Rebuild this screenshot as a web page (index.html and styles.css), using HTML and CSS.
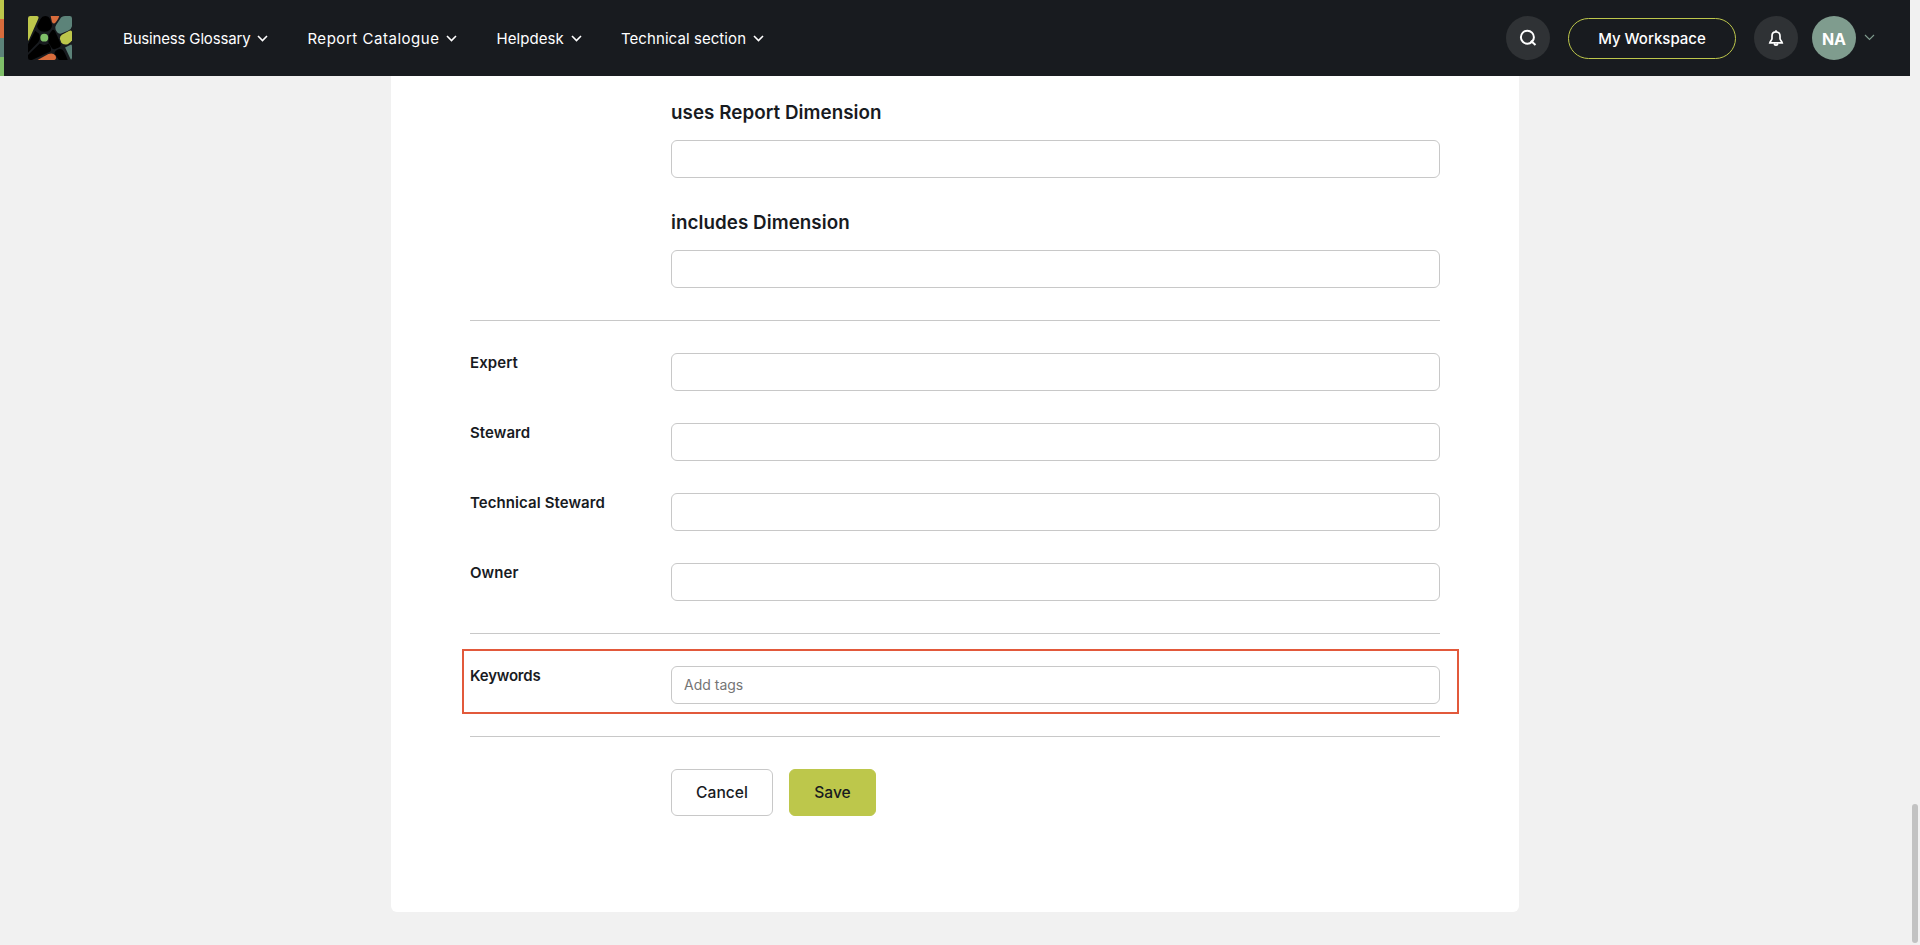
FILE: index.html
```
<!DOCTYPE html>
<html lang="en">
<head>
    <meta charset="UTF-8">
    <meta name="viewport" content="width=device-width, initial-scale=1.0">
    <title>Report - Edit</title>
    <link rel="stylesheet" href="styles.css">
</head>
<body>
    <div class="page">
        <header class="header">
            <div class="stripe"><span></span><span></span><span></span><span></span></div>
            <a class="logo" href="#">
                <svg width="44" height="44" viewBox="0 0 134 134">
                    <defs>
                        <clipPath id="logo-clip"><rect width="134" height="134" rx="7"/></clipPath>
                    </defs>
                    <g clip-path="url(#logo-clip)">
                        <rect width="134" height="134" fill="#181b1f"/>
                        <path d="M0 0H26Q35 0 31 9L4 70L0 76Z" fill="#bdc74b"/>
                        <path d="M38 9Q43 0 52 0Q63 0 67 9L73 27Q74 35 68 41Q61 48 50 48Q38 48 32 40Q26 33 28 29Z" fill="#000"/>
                        <path d="M22 45Q29 51 34 54Q36 57 36 66Q36 74 31 80L0 112V86Z" fill="#000"/>
                        <path d="M0 119L36 84Q50 93 63 84L69 95Q73 106 65 110L12 134H0Z" fill="#000"/>
                        <path d="M63 57L74 43Q77 39 82 46L99 83Q102 92 94 96L81 101Q75 103 71 95L62 80Q66 68 63 57Z" fill="#000"/>
                        <path d="M87 104Q97 98 105 103Q111 108 121 134H94Q87 123 82 117Q78 109 87 104Z" fill="#000"/>
                        <path d="M69 0H95Q94 6 84 20Q78 27 73 18Z" fill="#d86c3c"/>
                        <path d="M98 8Q102 0 113 0H134V31Q132 41 122 45L99 54Q89 54 84 41Q81 34 86 27Z" fill="#5c8379"/>
                        <path d="M103 57L126 45Q134 42 134 49V74Q131 81 121 86Q107 90 101 80L97 69Q97 62 103 57Z" fill="#bdc74b"/>
                        <path d="M113 96L128 88Q134 85 134 92V134H131Z" fill="#5c8379"/>
                        <path d="M29 134L62 116Q75 110 84 121Q88 131 80 134Z" fill="#d86c3c"/>
                        <circle cx="49.500" cy="66" r="12" fill="#7fbf69"/>
                    </g>
                </svg>
            </a>
            <nav class="nav">
                <a class="nav-item glossary" href="#">Business Glossary <svg class="chevron" viewBox="0 0 11 7"><path d="M1 1L5.500 5.500L10 1"/></svg></a>
                <a class="nav-item catalogue" href="#">Report Catalogue <svg class="chevron" viewBox="0 0 11 7"><path d="M1 1L5.500 5.500L10 1"/></svg></a>
                <a class="nav-item" href="#">Helpdesk <svg class="chevron" viewBox="0 0 11 7"><path d="M1 1L5.500 5.500L10 1"/></svg></a>
                <a class="nav-item" href="#">Technical section <svg class="chevron" viewBox="0 0 11 7"><path d="M1 1L5.500 5.500L10 1"/></svg></a>
            </nav>
            <div class="tools">
                <button class="round-button" aria-label="Search">
                    <svg width="18" height="18" viewBox="0 0 18 18">
                        <circle cx="8.400" cy="8.200" r="6.500"/>
                        <path d="M11.800 11.800L16.500 16"/>
                    </svg>
                </button>
                <a class="workspace" href="#">My Workspace</a>
                <button class="round-button" aria-label="Notifications">
                    <svg class="bell" width="16" height="18" viewBox="0 0 16 18">
                        <path d="M8 1.300V2.800M8 2.800C5.300 2.800 4 4.700 4 7V9.500C4 11 2.300 12.200 1.800 13.900H14.200C13.700 12.200 12 11 12 9.500V7C12 4.700 10.700 2.800 8 2.800ZM6 15.200Q8 17.200 10 15.200"/>
                    </svg>
                </button>
                <div class="avatar">NA</div>
                <svg class="chevron user-chevron" viewBox="0 0 11 7"><path d="M1 1L5.500 5.500L10 1"/></svg>
            </div>
        </header>

        <main class="card">
            <section class="relations">
                <h3>uses Report Dimension</h3>
                <input class="field" type="text">
                <h3>includes Dimension</h3>
                <input class="field" type="text">
            </section>

            <section class="group">
                <div class="row">
                    <label for="expert">Expert</label>
                    <input class="field" id="expert" type="text">
                </div>
                <div class="row">
                    <label for="steward">Steward</label>
                    <input class="field" id="steward" type="text">
                </div>
                <div class="row">
                    <label for="technical">Technical Steward</label>
                    <input class="field" id="technical" type="text">
                </div>
                <div class="row">
                    <label for="owner">Owner</label>
                    <input class="field" id="owner" type="text">
                </div>
            </section>

            <section class="group">
                <div class="row highlighted">
                    <label class="keywords" for="keywords">Keywords</label>
                    <input class="field" id="keywords" type="text" placeholder="Add tags">
                </div>
            </section>

            <div class="group actions">
                <button class="button cancel">Cancel</button>
                <button class="button save">Save</button>
            </div>
        </main>
    </div>
    <div class="scrollbar"><div class="thumb"></div></div>
</body>
</html>
```
FILE: styles.css
```
* {
    box-sizing: border-box;
}

body {
    display: flex;
    height: 100vh;
    margin: 0;
    overflow: hidden;
    background: #f1f1f1;
    color: #181b1f;
    font-family: Inter, "Open Sans", sans-serif;
    font-size: 15px;
    line-height: 20px;
}

a {
    color: inherit;
    text-decoration: none;
}

button,
input {
    font-family: inherit;
}

.page {
    flex: 1;
}

/* Header */
.header {
    display: flex;
    align-items: center;
    height: 76px;
    padding-right: 35px;
    background: #181b1f;
    color: #fff;
}

.stripe {
    display: flex;
    flex-direction: column;
    align-self: stretch;
    width: 4px;
}

.stripe span {
    flex: 1;
    background: #bdc74b;
}

.stripe span:nth-child(2) {
    background: #d86c3c;
}

.stripe span:nth-child(3) {
    background: #5c8379;
}

.stripe span:nth-child(4) {
    background: #7fbf69;
}

.logo {
    display: flex;
    margin-left: 24px;
}

.nav {
    display: flex;
    gap: 39px;
    margin-left: 51px;
    padding-top: 1px;
}

.nav-item {
    display: flex;
    align-items: center;
    gap: 7px;
    letter-spacing: 0.08px;
    white-space: nowrap;
}

.nav-item.glossary {
    letter-spacing: -0.17px;
}

.nav-item.catalogue {
    letter-spacing: 0.53px;
}

.chevron {
    width: 11px;
    height: 7px;
    fill: none;
    stroke: #fff;
    stroke-width: 1.6;
}

.user-chevron {
    margin: -1px 0 0 8px;
    stroke: #7f9c8e;
    stroke-width: 1.1;
}

.tools {
    display: flex;
    align-items: center;
    margin-left: auto;
}

.round-button {
    display: flex;
    align-items: center;
    justify-content: center;
    width: 44px;
    height: 44px;
    padding: 0;
    border: none;
    border-radius: 50%;
    background: #2f3235;
}

.round-button svg {
    fill: none;
    stroke: #fff;
    stroke-width: 2;
}

.round-button .bell {
    stroke-width: 1.7;
}

.workspace {
    display: flex;
    align-items: center;
    justify-content: center;
    width: 168px;
    height: 41px;
    margin: 0 18px;
    padding-top: 1px;
    border: 1px solid #bdc74b;
    border-radius: 21px;
    font-weight: 500;
}

.avatar {
    width: 44px;
    height: 44px;
    margin-left: 14px;
    border-radius: 50%;
    background: #7f9c8e;
    font-size: 16px;
    font-weight: 700;
    line-height: 46px;
    text-align: center;
}

/* Form */
.card {
    width: 1128px;
    margin: 0 auto;
    padding: 25px 79px 96px;
    border-radius: 0 0 6px 6px;
    background: #fff;
}

.relations {
    padding: 0 0 32px 201px;
}

.relations h3 {
    margin: 0 0 15px;
    font-size: 18.8px;
    font-weight: 600;
    letter-spacing: 0.05px;
    line-height: 24px;
}

.relations .field + h3 {
    margin-top: 33px;
}

.field {
    display: block;
    width: 100%;
    height: 38px;
    padding: 0 12px 2px;
    border: 1px solid #c8c8c8;
    border-radius: 6px;
    background: #fff;
    font-size: 14px;
}

.field::placeholder {
    color: #757575;
}

.group {
    display: flex;
    flex-direction: column;
    gap: 32px;
    padding: 32px 0;
    border-top: 1px solid #c8c8c8;
}

.row {
    display: grid;
    grid-template-columns: 201px 1fr;
}

.row label {
    font-weight: 600;
    letter-spacing: 0.08px;
}

.row .keywords {
    letter-spacing: -0.2px;
}

.highlighted {
    position: relative;
}

.highlighted::after {
    content: "";
    position: absolute;
    inset: -17px -19px -10px -8px;
    border: 2px solid #e2593b;
    pointer-events: none;
}

.actions {
    flex-direction: row;
    gap: 16px;
    padding: 32px 0 0 201px;
}

.button {
    height: 47px;
    padding: 0;
    border: 1px solid #c8c8c8;
    border-radius: 6px;
    background: #fff;
    color: #181b1f;
    font-size: 15.6px;
    font-weight: 500;
}

.cancel {
    width: 102px;
}

.save {
    width: 87px;
    border-color: #bdc74b;
    background: #bdc74b;
}

.scrollbar {
    display: flex;
    align-items: flex-end;
    width: 10px;
    padding: 2px;
}

.thumb {
    width: 6px;
    height: 139px;
    border-radius: 3px;
    background: #c2c2c2;
}
```
